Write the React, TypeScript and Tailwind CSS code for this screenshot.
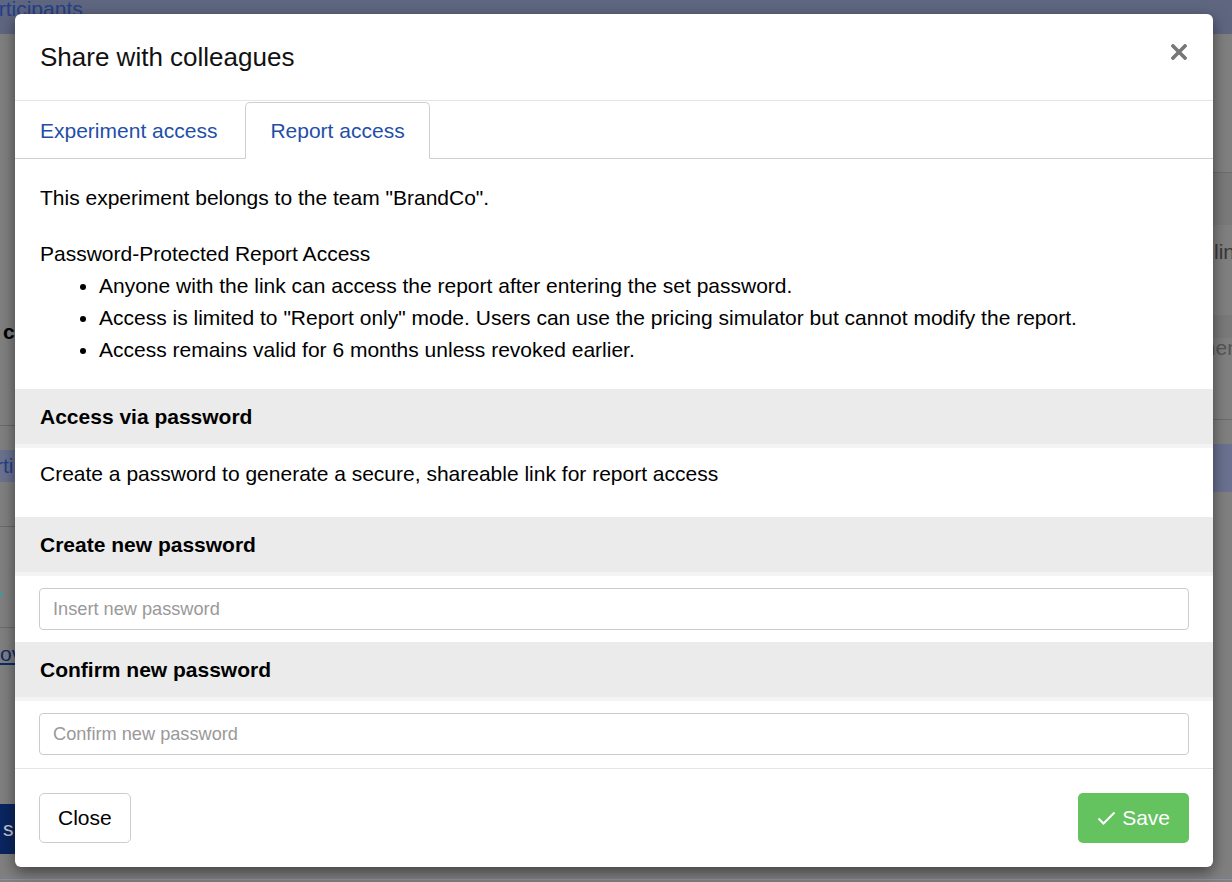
import React from "react";

const font = { fontFamily: '"Liberation Sans", Arial, sans-serif' };

function Band({ children }: { children: React.ReactNode }) {
  return (
    <div className="h-[59px] bg-[#ebebeb] border-b-4 border-[#f4f4f4] px-[25px] flex items-center font-bold text-[21px] leading-[32px] text-black">
      {children}
    </div>
  );
}

function Background() {
  return (
    <div className="w-[1232px] h-[882px] bg-[#808080] flex flex-col overflow-hidden">
      <div className="h-[34px] bg-[#5f6680] shrink-0 overflow-hidden">
        <div className="text-[21px] leading-[20px] text-[#24408a] -ml-[27px] -mt-[1px]">Participants</div>
      </div>
      <div className="h-[845px] shrink-0 flex justify-between">
        <div className="w-[200px] flex flex-col">
          <div className="h-[282px] shrink-0" />
          <div className="h-[32px] shrink-0 leading-[32px] text-[21px] font-bold text-black pl-[3px]">c</div>
          <div className="h-[77px] shrink-0" />
          <div className="h-[25px] shrink-0 border-t border-[#6b6b6b]" />
          <div className="h-[32px] shrink-0 bg-[#6a7290] text-[21px] leading-[32px] text-[#24408a] -ml-[4px] overflow-hidden">rti</div>
          <div className="h-[44px] shrink-0" />
          <div className="h-[101px] shrink-0 border-t border-[#6b6b6b]">
            <div className="w-[3px] h-[3px] bg-[#3aa0a0] mt-[66px]" />
          </div>
          <div className="h-[38px] shrink-0 border-t border-[#6b6b6b] pt-[14px]">
            <span className="text-[21px] leading-[24px] text-[#0d2a6a] underline">ov</span>
          </div>
          <div className="h-[139px] shrink-0" />
          <div className="h-[50px] shrink-0 w-[120px] bg-[#0a2560] text-[#c8cbd6] text-[21px] leading-[50px] pl-[3px]">s</div>
        </div>
        <div className="w-[40px] flex flex-col overflow-hidden">
          <div className="h-[138px] shrink-0" />
          <div className="h-[53px] shrink-0 border-t border-[#6d6d6d] bg-[#7a7a7a]" />
          <div className="h-[90px] shrink-0 pt-[11px] pl-[22px] text-[21px] leading-[32px] text-[#3a3a3a] whitespace-nowrap">
            line
          </div>
          <div className="h-[23px] shrink-0 bg-[#7a7a7a]" />
          <div className="h-[87px] shrink-0 -mt-[6px] pl-[6px] text-[21px] leading-[32px] text-[#555] whitespace-nowrap">
            mener
          </div>
          <div className="h-[25px] shrink-0 border-t border-[#6d6d6d]" />
          <div className="h-[48px] shrink-0 bg-[#6a7290]" />
        </div>
      </div>
      <div className="h-[1px] shrink-0 bg-[#8a90a8]" />
    </div>
  );
}

export default function App() {
  return (
    <div className="relative w-[1232px] h-[882px] overflow-hidden" style={font}>
      <Background />
      <div className="absolute left-[15px] top-[14px] w-[1198px] bg-white rounded-[6px] shadow-[0_5px_15px_rgba(0,0,0,0.5)] overflow-hidden text-black">
        {/* Header */}
        <div className="h-[87px] px-[25px] flex items-center justify-between border-b border-[#e5e5e5]">
          <h4 className="text-[26px] leading-[39px] font-normal text-[#111]">Share with colleagues</h4>
          <button className="mb-[10px] w-[18px] h-[18px] flex items-center justify-center" aria-label="Close">
            <svg width="16" height="16" viewBox="0 0 16 16">
              <path d="M2 2 L14 14 M14 2 L2 14" stroke="#777" strokeWidth="3.6" strokeLinecap="square" />
            </svg>
          </button>
        </div>
        {/* Tabs */}
        <div className="flex pt-[1px] border-b border-[#cfcfcf] gap-[3px]">
          <div className="h-[57px] -mb-px px-[24px] flex items-center border border-transparent rounded-t-[5px] text-[21px] text-[#1f4fa8]">
            Experiment access
          </div>
          <div className="h-[57px] -mb-px px-[24px] flex items-center border border-[#cfcfcf] border-b-white bg-white rounded-t-[5px] text-[21px] text-[#1f4fa8]">
            Report access
          </div>
        </div>
        {/* Intro */}
        <div className="px-[25px] pt-[23px] pb-[23px] text-[21px] leading-[32px]">
          <p className="mb-[24px]">This experiment belongs to the team "BrandCo".</p>
          <p>Password-Protected Report Access</p>
          <ul className="list-disc pl-[59px]">
            <li>Anyone with the link can access the report after entering the set password.</li>
            <li>Access is limited to "Report only" mode. Users can use the pricing simulator but cannot modify the report.</li>
            <li>Access remains valid for 6 months unless revoked earlier.</li>
          </ul>
        </div>
        <Band>Access via password</Band>
        <div className="px-[25px] pt-[10px] pb-[27px] text-[21px] leading-[32px]">
          Create a password to generate a secure, shareable link for report access
        </div>
        <Band>Create new password</Band>
        <div className="px-[24px] py-[12px]">
          <input
            type="password"
            placeholder="Insert new password"
            className="w-full h-[42px] border border-[#ccc] rounded-[4px] px-[13px] text-[18.2px] placeholder:text-[#999] outline-none"
            style={font}
          />
        </div>
        <Band>Confirm new password</Band>
        <div className="px-[24px] pt-[12px] pb-[13px]">
          <input
            type="password"
            placeholder="Confirm new password"
            className="w-full h-[42px] border border-[#ccc] rounded-[4px] px-[13px] text-[18.2px] placeholder:text-[#999] outline-none"
            style={font}
          />
        </div>
        {/* Footer */}
        <div className="border-t border-[#e5e5e5] px-[24px] pt-[24px] pb-[24px] flex justify-between">
          <button className="h-[50px] px-[18px] border border-[#ccc] rounded-[5px] bg-white text-[21px] text-black" style={font}>
            Close
          </button>
          <button className="h-[50px] px-[19px] rounded-[5px] bg-[#64c25f] text-white text-[21px] flex items-center gap-[6px]" style={font}>
            <svg width="19" height="16" viewBox="0 0 19 16" fill="none">
              <path d="M1.5 8.5 L6.5 13.5 L17.5 2.5" stroke="white" strokeWidth="2" />
            </svg>
            Save
          </button>
        </div>
      </div>
    </div>
  );
}
